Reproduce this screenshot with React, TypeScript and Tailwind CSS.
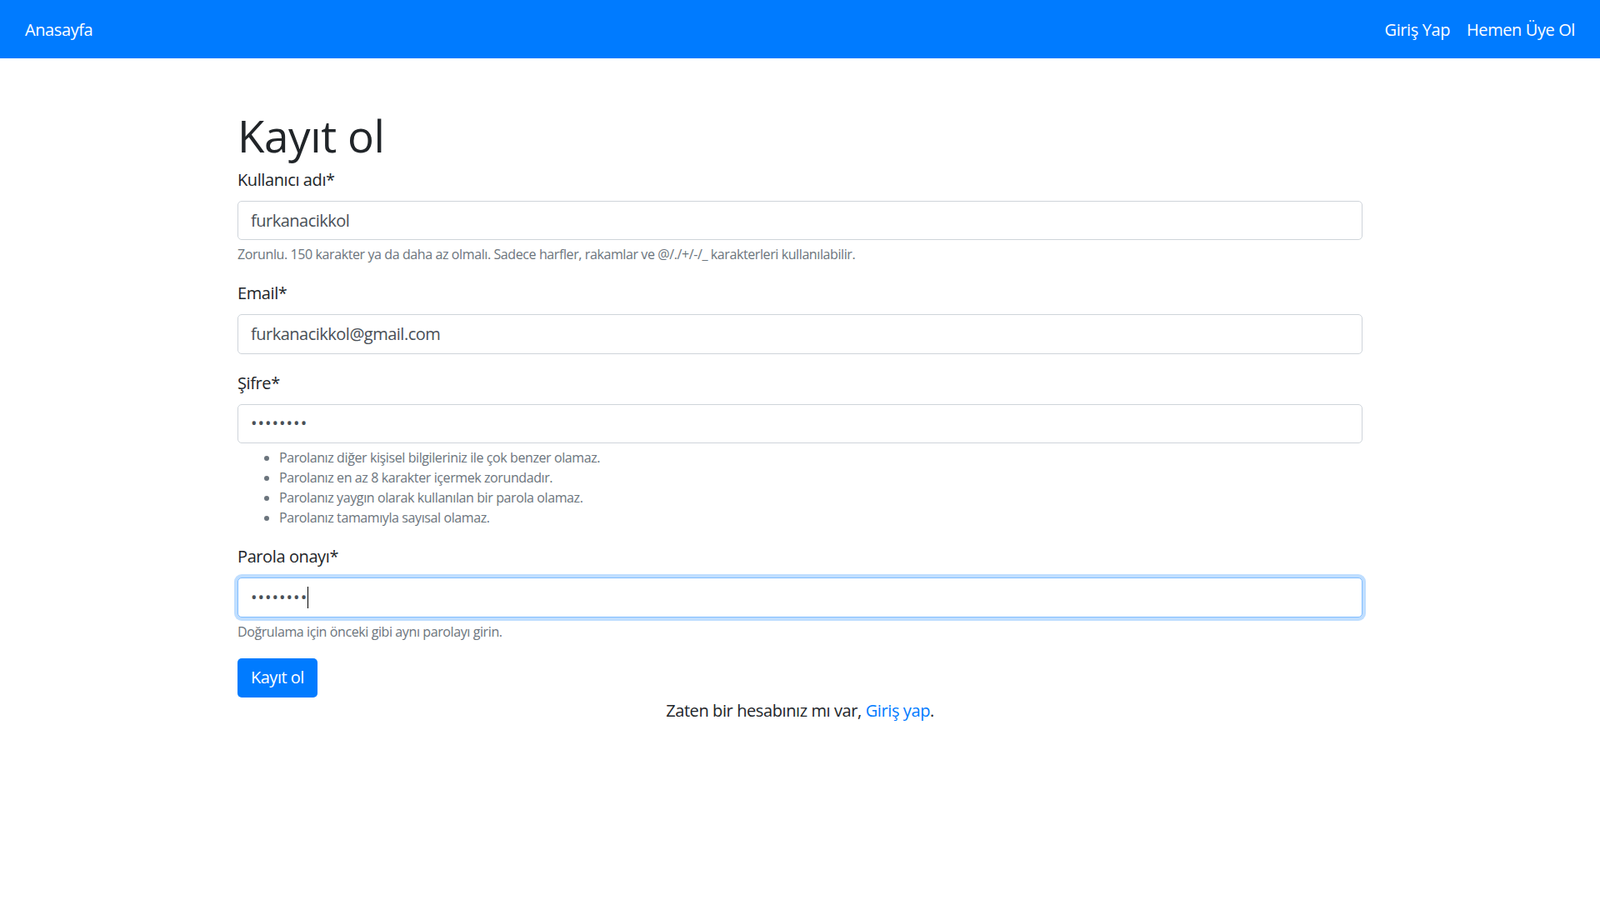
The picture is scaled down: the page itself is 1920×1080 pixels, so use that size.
import React from 'react'

const font = { fontFamily: '"Open Sans", "Noto Sans", Arial, sans-serif' }

function Field({
  label,
  children,
  help,
}: {
  label: string
  children: React.ReactNode
  help?: React.ReactNode
}) {
  return (
    <div className="mb-[20px]">
      <label className="block text-[20px] leading-[30px] text-[#212529] mb-[10px]">{label}</label>
      {children}
      {help}
    </div>
  )
}

const inputCls =
  'block w-full h-[47.5px] px-[15px] text-[20px] text-[#495057] bg-white border border-[#ced4da] rounded-[5px] outline-none tracking-[-0.025em]'

export default function App() {
  return (
    <div className="min-h-screen bg-white tracking-[-0.025em]" style={font}>
      <nav className="h-[70px] bg-[#007bff] flex items-center justify-between px-[30px] pt-[2px]">
        <a className="text-white text-[20px] leading-[30px]">Anasayfa</a>
        <div className="flex items-center gap-[20px]">
          <a className="text-white text-[20px] leading-[30px]">Giriş Yap</a>
          <a className="text-white text-[20px] leading-[30px]">Hemen Üye Ol</a>
        </div>
      </nav>

      <main className="w-[1350px] mx-auto pt-[61px]">
        <h1 className="text-[53px] leading-[1.2] font-medium text-[#212529] mb-[6px]">Kayıt ol</h1>

        <form onSubmit={(e) => e.preventDefault()}>
          <Field
            label="Kullanıcı adı*"
            help={
              <small className="block mt-[5px] text-[16px] leading-[24px] text-[#6c757d]">
                Zorunlu. 150 karakter ya da daha az olmalı. Sadece harfler, rakamlar ve @/./+/-/_ karakterleri kullanılabilir.
              </small>
            }
          >
            <input className={inputCls} defaultValue="furkanacikkol" readOnly />
          </Field>

          <Field label="Email*">
            <input className={inputCls} defaultValue="furkanacikkol@gmail.com" readOnly />
          </Field>

          <Field
            label="Şifre*"
            help={
              <ul className="mt-[5px] list-disc pl-[50px] text-[16px] leading-[24px] text-[#6c757d]">
                <li>Parolanız diğer kişisel bilgileriniz ile çok benzer olamaz.</li>
                <li>Parolanız en az 8 karakter içermek zorundadır.</li>
                <li>Parolanız yaygın olarak kullanılan bir parola olamaz.</li>
                <li>Parolanız tamamıyla sayısal olamaz.</li>
              </ul>
            }
          >
            <div className={inputCls + ' flex items-center'}>
              <span className="tracking-[1px]">••••••••</span>
            </div>
          </Field>

          <Field
            label="Parola onayı*"
            help={
              <small className="block mt-[5px] text-[16px] leading-[24px] text-[#6c757d]">
                Doğrulama için önceki gibi aynı parolayı girin.
              </small>
            }
          >
            <div className="block w-full h-[47.5px] px-[15px] text-[20px] text-[#495057] bg-white border border-[#80bdff] rounded-[5px] shadow-[0_0_0_4px_rgba(0,123,255,0.25)] flex items-center">
              <span className="tracking-[1px]">••••••••</span>
              <span className="inline-block w-px h-[26px] bg-black" />
            </div>
          </Field>

          <button
            type="submit"
            className="h-[47.5px] px-[16px] bg-[#007bff] text-white text-[20px] rounded-[5px] tracking-[-0.025em]"
          >
            Kayıt ol
          </button>
        </form>

        <p className="text-center text-[20px] leading-[30px] text-[#212529] mt-[1px]">
          Zaten bir hesabınız mı var, <a className="text-[#007bff]">Giriş yap</a>.
        </p>
      </main>
    </div>
  )
}
